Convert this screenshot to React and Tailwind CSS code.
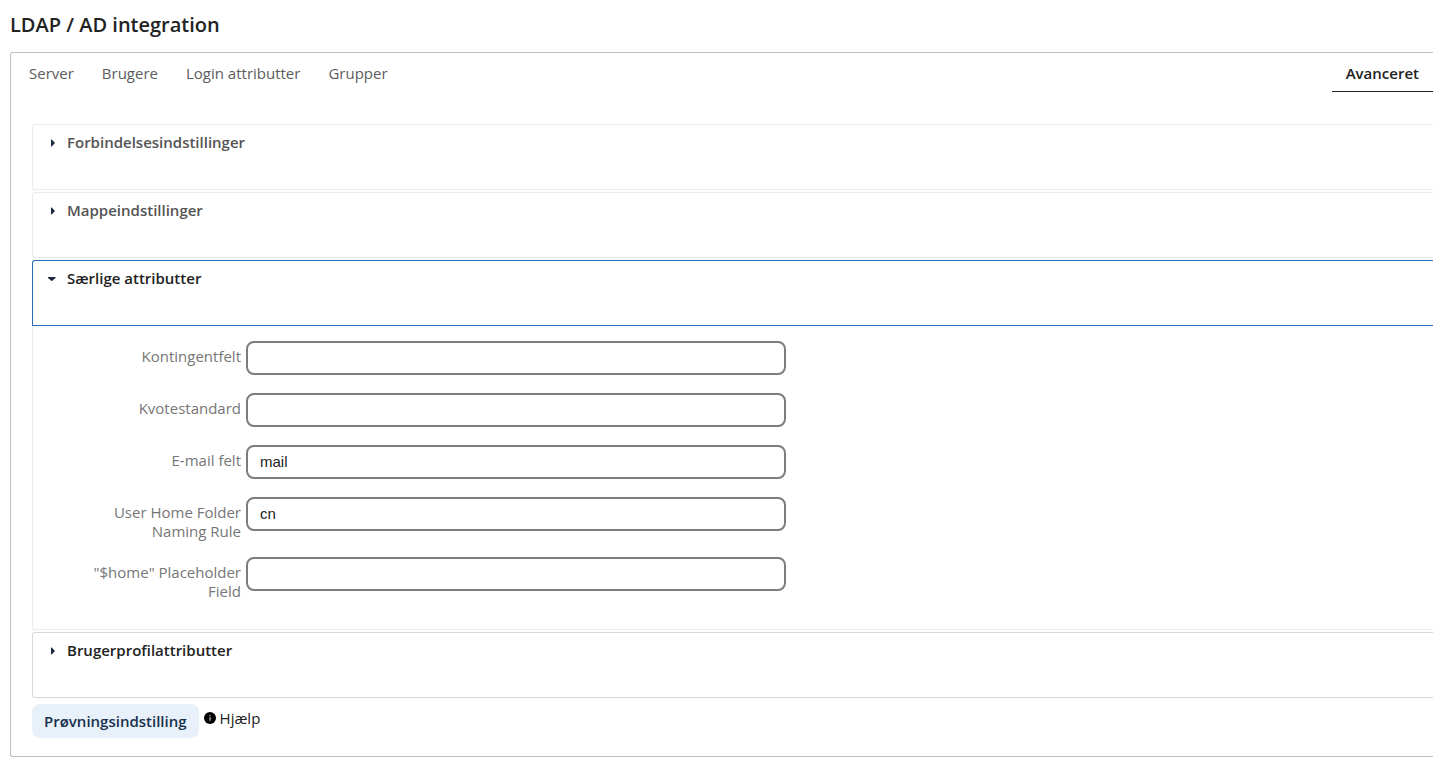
import React from 'react';

const tabs = ['Server', 'Brugere', 'Login attributter', 'Grupper'];

const fields = [
  { id: 'quota-field', label: 'Kontingentfelt', value: '' },
  { id: 'quota-default', label: 'Kvotestandard', value: '' },
  { id: 'email-field', label: 'E-mail felt', value: 'mail' },
  { id: 'home-naming-rule', label: 'User Home Folder Naming Rule', value: 'cn' },
  { id: 'home-placeholder', label: '"$home" Placeholder Field', value: '' },
];

const Caret = ({ open }) => (
  <svg className="w-4 h-4 shrink-0" viewBox="0 0 16 16" fill="#1c2a44" aria-hidden="true">
    {open ? <path d="M4 6h7.5v1L8 10h-.5L4 7z" /> : <path d="M7 4.5h.7L11 8l-3.3 3.5H7z" />}
  </svg>
);

const SectionHeader = ({ title, open = false, className }) => (
  <h3>
    <button
      type="button"
      aria-expanded={open}
      className={`w-full h-[66px] pl-[11px] pt-2 flex items-start gap-[7px] border border-r-0 text-left text-[15px] leading-[19px] font-semibold ${className}`}
    >
      <span className="h-5 flex items-center">
        <Caret open={open} />
      </span>
      {title}
    </button>
  </h3>
);

const Field = ({ id, label, value }) => (
  <div className="flex items-start gap-[5px] min-h-9 mb-4">
    <label htmlFor={id} className="w-[150px] shrink-0 pt-[6px] text-right text-[15px] leading-[19px] text-[#767676]">
      {label}
    </label>
    <input
      id={id}
      type="text"
      defaultValue={value}
      className="w-full max-w-[540px] h-[34px] px-3 pb-[2px] rounded-lg border-2 border-[#7d7d7d] bg-white font-['Liberation_Sans',sans-serif] text-[15px] text-[#222222]"
    />
  </div>
);

export default function App() {
  return (
    <main className="pl-[10px] pb-1 bg-white font-['Open_Sans',sans-serif] text-[#222222]">
      <h2 className="pt-[10px] pb-3 text-xl leading-[30px] font-semibold">LDAP / AD integration</h2>

      <div className="border border-r-0 border-[#c0c0c0] rounded-l-[3px] pb-[18px]">
        <nav className="flex pl-1 text-[15px] leading-[19px]">
          {tabs.map((tab) => (
            <a key={tab} href="#" className="px-[14px] pt-[11px] pb-2 text-[#5c5c5c]">
              {tab}
            </a>
          ))}
          <a
            href="#"
            aria-current="page"
            className="ml-auto px-[14px] pt-[11px] pb-2 border-b border-[#222222] font-semibold"
          >
            Avanceret
          </a>
        </nav>

        <div className="pl-[21px] pt-8">
          <div className="flex flex-col gap-[2px]">
            <SectionHeader title="Forbindelsesindstillinger" className="rounded-l-[3px] border-[#ebebeb] text-[#545454]" />
            <SectionHeader title="Mappeindstillinger" className="rounded-l-[3px] border-[#ebebeb] text-[#545454]" />
            <section>
              <SectionHeader title="Særlige attributter" open className="rounded-tl-[3px] border-[#286fb8] text-[#222222]" />
              <div className="pl-[58px] pt-[15px] pb-3 border-l border-b border-[#ebebeb] rounded-bl-[3px]">
                {fields.map((field) => (
                  <Field key={field.id} {...field} />
                ))}
              </div>
            </section>
            <SectionHeader title="Brugerprofilattributter" className="rounded-l-[3px] border-[#d8d8d8] text-[#222222]" />
          </div>

          <div className="flex items-start gap-[5px] pt-[6px]">
            <button
              type="button"
              className="h-[34px] px-3 rounded-lg bg-[#e8f0f9] text-[15px] leading-[19px] font-semibold text-[#17304d]"
            >
              Prøvningsindstilling
            </button>
            <a href="#" className="flex items-start gap-1 pt-[5px] text-[15px] leading-[19px]">
              <svg className="w-3 h-3 mt-[3px]" viewBox="0 0 12 12" aria-hidden="true">
                <circle cx="6" cy="6" r="6" fill="#000" />
                <path d="M5.4 3h1.3v1.3H5.4zM5.4 5.2h1.3v3.6H5.4z" fill="#bbb" />
              </svg>
              Hjælp
            </a>
          </div>
        </div>
      </div>
    </main>
  );
}
